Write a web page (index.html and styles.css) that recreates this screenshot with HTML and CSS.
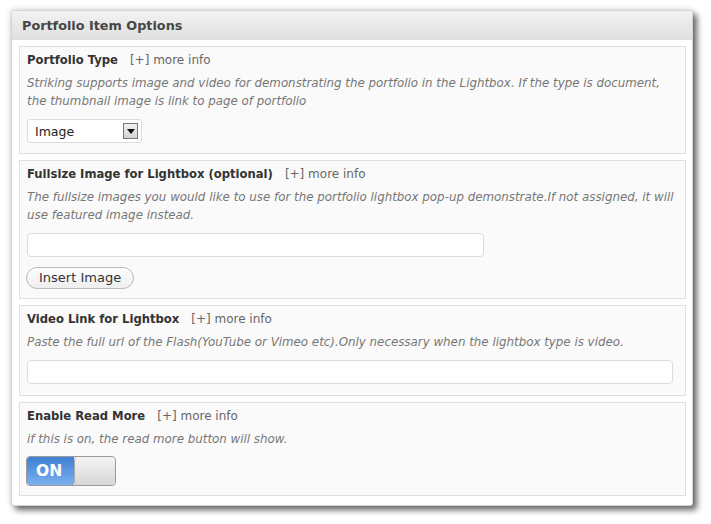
FILE: index.html
```html
<!DOCTYPE html>
<html>
<head>
<meta charset="utf-8">
<link rel="stylesheet" href="styles.css">
</head>
<body>
<div class="page">
  <div class="panel">
    <div class="panel-head">Portfolio Item Options</div>
    <div class="panel-body">
      <div class="opt">
        <div class="opt-title"><b>Portfolio Type</b><span class="more">[+] more info</span></div>
        <div class="desc">Striking supports image and video for demonstrating the portfolio in the Lightbox. If the type is document, the thumbnail image is link to page of portfolio</div>
        <div class="select ctl"><span>Image</span><span class="arrow"><svg width="8" height="5" viewBox="0 0 8 5"><path d="M0 0H8L4 5Z" fill="#111"/></svg></span></div>
      </div>
      <div class="opt tight">
        <div class="opt-title"><b>Fullsize Image for Lightbox (optional)</b><span class="more">[+] more info</span></div>
        <div class="desc">The fullsize images you would like to use for the portfolio lightbox pop-up demonstrate.If not assigned, it will use featured image instead.</div>
        <div class="input ctl w-mid"></div>
        <div class="btn">Insert Image</div>
      </div>
      <div class="opt loose">
        <div class="opt-title"><b>Video Link for Lightbox</b><span class="more">[+] more info</span></div>
        <div class="desc">Paste the full url of the Flash(YouTube or Vimeo etc).Only necessary when the lightbox type is video.</div>
        <div class="input ctl w-full"></div>
      </div>
      <div class="opt last">
        <div class="opt-title"><b>Enable Read More</b><span class="more">[+] more info</span></div>
        <div class="desc">if this is on, the read more button will show.</div>
        <div class="toggle ctl"><span class="on">ON</span><span class="knob"></span></div>
      </div>
    </div>
  </div>
</div>
</body>
</html>
```
FILE: styles.css
```css
html, body { margin: 0; padding: 0; background: #fff; }
body { font-family: "DejaVu Sans", Verdana, sans-serif; font-size: 12px; color: #333; }
.page { padding: 10px 18px 20px 11px; }
.panel {
  width: 682px;
  border: 1px solid #d4d4d4;
  border-radius: 3px;
  background: #fff;
  box-shadow: 4px 4px 6px rgba(0,0,0,0.6), -1px -1px 6px rgba(0,0,0,0.12);
  box-sizing: border-box;
}
.panel-head {
  height: 29px;
  line-height: 29px;
  padding-left: 10px;
  font-weight: bold;
  font-size: 12.8px;
  color: #464646;
  background: linear-gradient(#f2f2f2, #dfdfdf);
  border-radius: 3px 3px 0 0;
}
.panel-body { padding: 6px 6px 9px 7px; }
.opt {
  border: 1px solid #e0e0e0;
  background: #fafafa;
  padding: 4px 4px 10px 7px;
  margin-bottom: 6px;
}
.opt.tight { padding-bottom: 9px; }
.opt.loose { padding-bottom: 11px; }
.opt.last { margin-bottom: 0; padding-bottom: 9px; }
.opt-title { line-height: 18px; display: flex; align-items: baseline; }
.opt-title b { font-size: 11.6px; color: #333; }
.more { margin-left: 12px; color: #666; }
.desc { margin-top: 5px; line-height: 18px; font-style: italic; color: #777; font-size: 11.85px; }
.ctl { margin-top: 9px; }
.select {
  width: 115px; height: 24px; box-sizing: border-box;
  border: 1px solid #dcdcdc; border-radius: 3px; background: #fff;
  display: flex; align-items: center; justify-content: space-between;
  padding: 0 3px 0 7px; color: #222; font-size: 12.5px;
}
.arrow {
  width: 15px; height: 16px; box-sizing: border-box;
  border: 1px solid #777; background: linear-gradient(#f0f0f0, #d4d4d4);
  display: flex; align-items: center; justify-content: center;
}
.input {
  height: 24px; box-sizing: border-box;
  border: 1px solid #dcdcdc; border-radius: 4px; background: #fff;
}
.w-mid { width: 457px; }
.w-full { width: 646px; }
.btn {
  margin-top: 10px;
  display: inline-block;
  height: 22px; line-height: 20px; box-sizing: border-box;
  padding: 0 12px;
  border: 1px solid #bbb; border-radius: 11px;
  background: linear-gradient(#fefefe, #eee);
  font-size: 13px; color: #333;
  margin-left: -1px;
}
.toggle {
  margin-top: 8px; margin-left: -1px;
  width: 90px; height: 30px; box-sizing: border-box;
  display: flex; border: 1px solid #9a9a9a; border-radius: 4px; overflow: hidden;
}
.toggle .on {
  width: 47px; display: flex; align-items: center; padding-left: 9px; box-sizing: border-box;
  background: linear-gradient(#3f7fd3, #7ab0ee);
  color: #fff; font-weight: bold; font-size: 15.5px;
}
.toggle .knob {
  flex: 1; background: linear-gradient(#f4f4f4, #d6d6d6);
  border-left: 1px solid #aaa; border-radius: 4px;
}
```
